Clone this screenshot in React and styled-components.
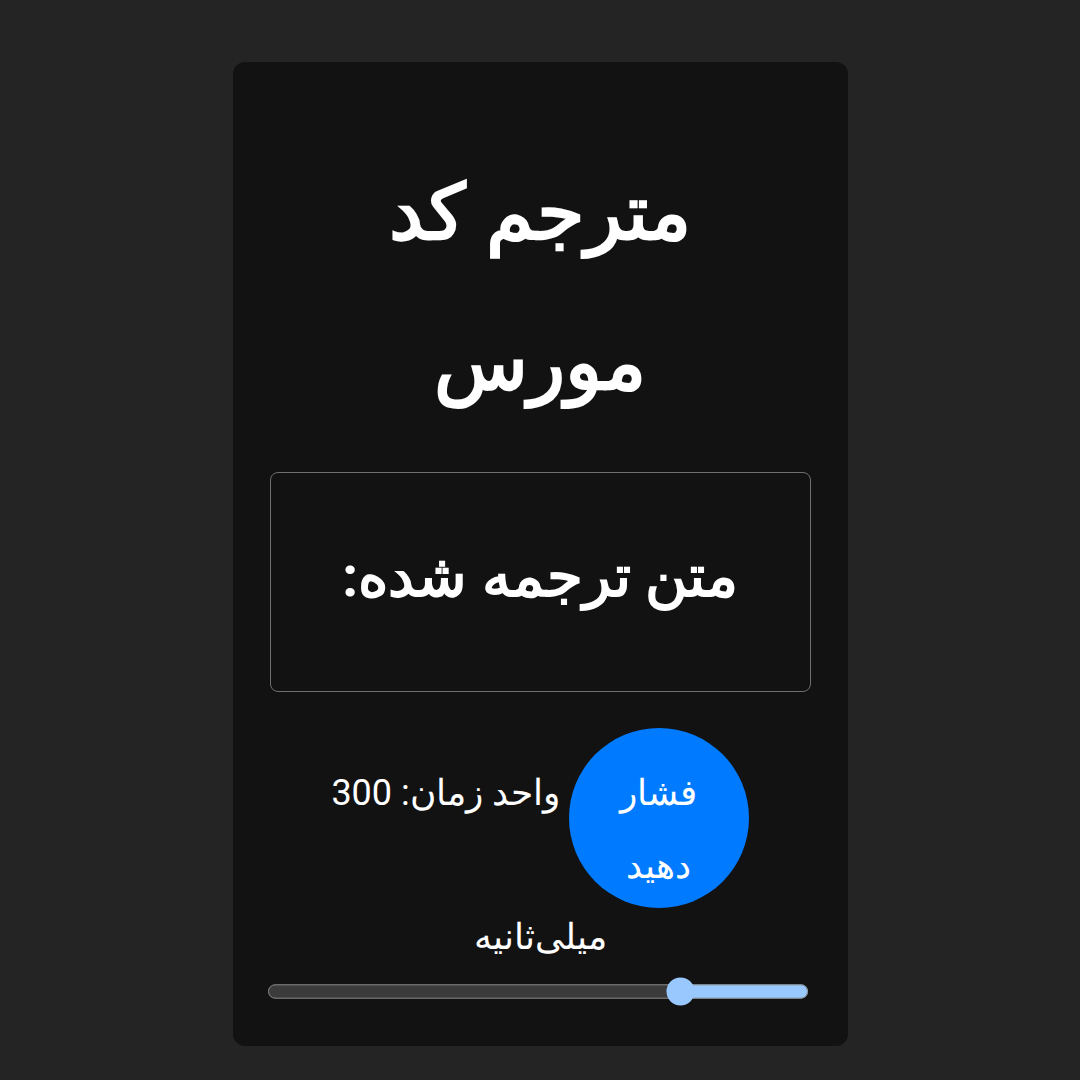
import { useState } from "react";
import styled, { createGlobalStyle } from "styled-components";

const GlobalStyle = createGlobalStyle`
  html, body {
    margin: 0;
    background: #242424;
    color-scheme: dark;
  }
  body {
    font-family: Roboto, "Noto Sans", sans-serif;
  }
`;

const Page = styled.div`
  min-height: 1080px;
  box-sizing: border-box;
  padding-top: 62px;
  display: flex;
  justify-content: center;
  align-items: flex-start;
`;

const Card = styled.div`
  width: 615px;
  height: 984px;
  box-sizing: border-box;
  padding: 76px 37px 0;
  background: #121212;
  border-radius: 12px;
  color: #ffffff;
  direction: rtl;
  text-align: center;
`;

const Title = styled.h1`
  max-width: 440px;
  margin: 0 auto;
  font-size: 77px;
  line-height: 150px;
  font-weight: 700;
`;

const OutputBox = styled.div`
  margin-top: 34px;
  height: 220px;
  box-sizing: border-box;
  border: 1px solid #6f6f6f;
  border-radius: 8px;
  display: flex;
  align-items: center;
  justify-content: center;
`;

const OutputText = styled.h2`
  margin: 0 0 10px;
  font-size: 58px;
  line-height: 1.4;
  font-weight: 700;
`;

const Controls = styled.div`
  margin-top: 36px;
  font-size: 36px;
  line-height: 58px;
`;

const PressButton = styled.button`
  display: inline-flex;
  align-items: center;
  justify-content: center;
  width: 180px;
  height: 180px;
  padding: 24px 30px 0;
  border: none;
  border-radius: 50%;
  background: #007bff;
  color: #ffffff;
  font-family: inherit;
  font-size: 36px;
  line-height: 73px;
  text-align: center;
  cursor: pointer;
`;

const Slider = styled.input`
  display: block;
  width: 301px;
  margin: 6px 1px 0 0;
  zoom: 1.8;
`;

export default function App() {
  const [unit, setUnit] = useState(300);

  return (
    <>
      <GlobalStyle />
      <Page>
        <Card>
          <Title>مترجم کد مورس</Title>
          <OutputBox>
            <OutputText>متن ترجمه شده:</OutputText>
          </OutputBox>
          <Controls>
            <PressButton>فشار دهید</PressButton> واحد زمان: {unit} میلی‌ثانیه
          </Controls>
          <Slider
            type="range"
            dir="rtl"
            min={100}
            max={1000}
            step={50}
            value={unit}
            onChange={(e) => setUnit(Number(e.target.value))}
          />
        </Card>
      </Page>
    </>
  );
}
